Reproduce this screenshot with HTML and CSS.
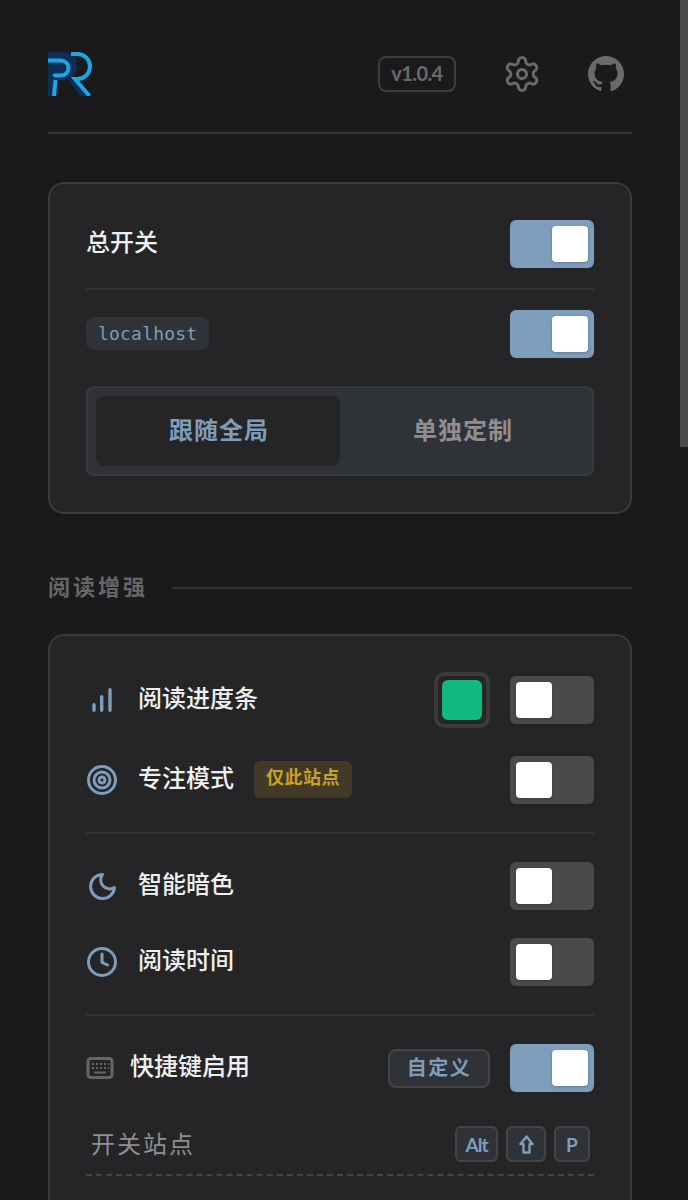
FILE: index.html
```html
<!DOCTYPE html>
<html lang="zh-CN">
<head>
  <meta charset="UTF-8">
  <meta name="viewport" content="width=device-width, initial-scale=1.0">
  <title>PR</title>
  <link rel="stylesheet" href="styles.css">
</head>
<body>
  <div class="scroll-thumb"></div>
  <div class="page">
    <header class="top-bar">
      <svg class="logo" width="44" height="44" viewBox="0 0 44 44" fill="none">
        <path d="M0 0H15a14 14 0 0 1 14 14a14 14 0 0 1-14 14H8l-1 16H0z" fill="#0b2f55"/>
        <path d="M20 27h9l12 17H32z" fill="#0b2f55"/>
        <path d="M23 2h6.500a12.500 12.500 0 0 1 0 25H27L41.500 44" stroke="#1aa7e8" stroke-width="4"/>
        <path d="M0 8.500H13a7.500 7.500 0 0 1 0 15H7L6.500 25M7.500 28L6 44" stroke="#1aa7e8" stroke-width="4"/>
      </svg>
      <span class="version">v1.0.4</span>
      <svg class="head-icon gear" width="36" height="36" viewBox="1 1 22 22" fill="none" stroke="#6a6a6a" stroke-width="1.800" stroke-linecap="round" stroke-linejoin="round">
        <path d="M12.220 2h-.44a2 2 0 0 0-2 2v.18a2 2 0 0 1-1 1.730l-.43.250a2 2 0 0 1-2 0l-.15-.080a2 2 0 0 0-2.730.730l-.22.380a2 2 0 0 0 .730 2.730l.15.100a2 2 0 0 1 1 1.720v.510a2 2 0 0 1-1 1.740l-.15.090a2 2 0 0 0-.730 2.730l.22.380a2 2 0 0 0 2.730.730l.15-.080a2 2 0 0 1 2 0l.43.250a2 2 0 0 1 1 1.730V20a2 2 0 0 0 2 2h.44a2 2 0 0 0 2-2v-.18a2 2 0 0 1 1-1.730l.43-.250a2 2 0 0 1 2 0l.15.080a2 2 0 0 0 2.730-.730l.22-.390a2 2 0 0 0-.730-2.730l-.15-.080a2 2 0 0 1-1-1.740v-.5a2 2 0 0 1 1-1.740l.15-.090a2 2 0 0 0 .730-2.730l-.22-.380a2 2 0 0 0-2.730-.730l-.15.080a2 2 0 0 1-2 0l-.43-.250a2 2 0 0 1-1-1.730V4a2 2 0 0 0-2-2z"/>
        <circle cx="12" cy="12" r="2.800"/>
      </svg>
      <svg class="head-icon github" width="36" height="36" viewBox="0 0 16 16" fill="#6a6a6a">
        <path d="M8 0C3.580 0 0 3.580 0 8c0 3.540 2.290 6.530 5.470 7.590.4.070.55-.17.55-.38 0-.19-.010-.82-.010-1.490-2.010.37-2.530-.49-2.690-.94-.09-.23-.48-.94-.82-1.130-.28-.15-.68-.52-.010-.53.630-.010 1.080.58 1.230.82.720 1.210 1.870.87 2.330.66.070-.52.280-.87.510-1.070-1.780-.2-3.640-.89-3.640-3.950 0-.87.31-1.590.82-2.150-.08-.2-.36-1.020.08-2.120 0 0 .67-.21 2.200.82.640-.18 1.320-.27 2-.27s1.360.09 2 .27c1.530-1.040 2.200-.82 2.200-.82.44 1.100.16 1.920.08 2.120.51.560.82 1.270.82 2.150 0 3.070-1.870 3.750-3.650 3.950.29.25.54.73.54 1.480 0 1.070-.010 1.930-.010 2.200 0 .21.15.46.55.38A8.010 8.010 0 0 0 16 8c0-4.420-3.580-8-8-8z"/>
      </svg>
    </header>

    <section class="card card-main">
      <div class="row">
        <span class="label">总开关</span>
        <div class="toggle on"><span class="knob"></span></div>
      </div>
      <div class="divider main-divider"></div>
      <div class="row">
        <span class="host">localhost</span>
        <div class="toggle on"><span class="knob"></span></div>
      </div>
      <div class="segment">
        <div class="seg-item active">跟随全局</div>
        <div class="seg-item">单独定制</div>
      </div>
    </section>

    <div class="section-title">
      <span class="section-name">阅读增强</span>
      <div class="section-line"></div>
    </div>

    <section class="card card-read">
      <div class="row">
        <svg class="row-icon" width="32" height="32" viewBox="0 0 32 32" fill="none" stroke="#7d9dba" stroke-width="3.400" stroke-linecap="round">
          <path d="M8 26.300v-5.600M15.700 26.300v-13.600M24 26.300v-20.600"/>
        </svg>
        <span class="label">阅读进度条</span>
        <div class="swatch"><span class="swatch-color"></span></div>
        <div class="toggle"><span class="knob"></span></div>
      </div>
      <div class="row gap-32">
        <svg class="row-icon" width="32" height="32" viewBox="0 0 32 32" fill="none" stroke="#7d9dba" stroke-width="3">
          <circle cx="16" cy="16" r="13.500"/>
          <circle cx="16" cy="16" r="8"/>
          <circle cx="16" cy="16" r="3"/>
        </svg>
        <span class="label">专注模式</span>
        <span class="tag">仅此站点</span>
        <div class="toggle push"><span class="knob"></span></div>
      </div>
      <div class="divider read-divider"></div>
      <div class="row">
        <svg class="row-icon" width="32" height="32" viewBox="0 0 32 32" fill="none" stroke="#7d9dba" stroke-width="3" stroke-linejoin="round">
          <path d="M16.500 4.500a12 12 0 1 0 12 13a9 9 0 0 1-12-13z"/>
        </svg>
        <span class="label">智能暗色</span>
        <div class="toggle push"><span class="knob"></span></div>
      </div>
      <div class="row gap-28">
        <svg class="row-icon" width="32" height="32" viewBox="0 0 32 32" fill="none" stroke="#7d9dba" stroke-width="3" stroke-linecap="round" stroke-linejoin="round">
          <circle cx="16" cy="16" r="13.500"/>
          <path d="M16 8v8.500l5.500 2.500"/>
        </svg>
        <span class="label">阅读时间</span>
        <div class="toggle push"><span class="knob"></span></div>
      </div>
      <div class="divider read-divider"></div>
      <div class="row">
        <svg class="key-icon" width="28" height="24" viewBox="0 0 28 24" fill="none">
          <rect x="2" y="2.500" width="24" height="19" rx="3" stroke="#666" stroke-width="3"/>
          <path d="M6 8h2M10 8h2M14 8h2M18 8h2M22 8h1M6 12h2M10 12h2M14 12h2M18 12h2M22 12h1" stroke="#666" stroke-width="2"/>
          <path d="M8 16.500h12" stroke="#666" stroke-width="2"/>
        </svg>
        <span class="label">快捷键启用</span>
        <span class="custom-btn">自定义</span>
        <div class="toggle on"><span class="knob"></span></div>
      </div>
      <div class="shortcut">
        <span class="shortcut-name">开关站点</span>
        <div class="keys">
          <kbd class="key key-alt">Alt</kbd>
          <kbd class="key key-arrow">
            <svg width="15" height="19" viewBox="0 0 15 19" fill="none" stroke="#7d9dba" stroke-width="2.400" stroke-linejoin="round">
              <path d="M7.500 1.500L13.500 9H10.500V17.500H4.500V9H1.500z"/>
            </svg>
          </kbd>
          <kbd class="key">P</kbd>
        </div>
      </div>
    </section>
  </div>
</body>
</html>
```

FILE: styles.css
```css
html {
  background: #1a1a1c;
}
body {
  margin: 0;
  color: #f0f0f0;
  font-family: "Noto Sans CJK SC", Lato, sans-serif;
  font-size: 24px;
}
.scroll-thumb {
  position: fixed;
  top: 0;
  right: 0;
  width: 8px;
  height: 447px;
  background: #4a4a4c;
}
.page {
  box-sizing: border-box;
  padding: 52px 56px 48px 48px;
}
.top-bar {
  display: flex;
  align-items: center;
  height: 44px;
  padding-bottom: 36px;
  border-bottom: 2px solid #333335;
  margin-bottom: 48px;
}
.logo {
  margin-right: auto;
}
.version {
  box-sizing: border-box;
  width: 78px;
  height: 36px;
  line-height: 30px;
  text-align: center;
  border: 2px solid #3c3c3e;
  border-radius: 8px;
  color: #6a6a6a;
  font-family: Lato, sans-serif;
  font-weight: 700;
  font-size: 20px;
  letter-spacing: -0.6px;
}
.head-icon {
  display: block;
}
.gear {
  margin-left: 48px;
}
.github {
  margin-left: 48px;
  margin-right: 8px;
}
.card {
  background: #252527;
  border: 2px solid #3a3a3c;
  border-radius: 16px;
}
.card-main {
  padding: 36px;
}
.card-read {
  padding: 40px 36px 36px;
  min-height: 1200px;
}
.row {
  display: flex;
  align-items: center;
  height: 48px;
}
.gap-32 {
  margin-top: 32px;
}
.gap-28 {
  margin-top: 28px;
}
.label {
  line-height: 34px;
  font-weight: 500;
  position: relative;
  top: -3px;
}
.card-main .label {
  margin-right: auto;
}
.toggle {
  box-sizing: border-box;
  width: 84px;
  height: 48px;
  padding: 6px;
  border-radius: 6px;
  background: #4a4a4c;
  display: flex;
  flex-shrink: 0;
}
.toggle.on {
  background: #7d9dba;
  justify-content: flex-end;
}
.toggle.push {
  margin-left: auto;
}
.knob {
  width: 36px;
  height: 36px;
  border-radius: 4px;
  background: #fff;
  box-shadow: 0 1px 3px rgba(0,0,0,0.2);
}
.divider {
  height: 2px;
  background: #333335;
}
.main-divider {
  margin: 20px 0;
}
.read-divider {
  margin: 28px 0;
}
.host {
  margin-right: auto;
  margin-bottom: 1px;
  padding: 0 12px;
  height: 33px;
  line-height: 34px;
  border-radius: 8px;
  background: #2f3237;
  color: #7d9dba;
  font-family: "DejaVu Sans Mono", monospace;
  font-size: 18px;
  letter-spacing: 0.2px;
}
.segment {
  box-sizing: border-box;
  height: 90px;
  margin-top: 28px;
  padding: 8px;
  display: flex;
  background: #2f3237;
  border: 2px solid #38393d;
  border-radius: 8px;
}
.seg-item {
  flex: 1;
  display: flex;
  align-items: center;
  justify-content: center;
  padding: 0 0 6px 2px;
  font-weight: 700;
  letter-spacing: 1px;
  color: #8f8f8f;
}
.seg-item.active {
  background: #252527;
  border-radius: 8px;
  color: #7d9dba;
}
.section-title {
  display: flex;
  align-items: center;
  gap: 24px;
  height: 30px;
  margin: 59px 0 31px;
  color: #666;
  font-weight: 700;
  font-size: 22px;
  letter-spacing: 3px;
}
.section-name {
  padding-bottom: 6px;
}
.section-line {
  flex: 1;
  height: 2px;
  background: #333335;
}
.row-icon {
  flex-shrink: 0;
  margin-right: 20px;
}
.key-icon {
  flex-shrink: 0;
  margin-right: 16px;
}
.swatch {
  box-sizing: border-box;
  width: 56px;
  height: 56px;
  padding: 4px;
  margin-left: auto;
  margin-right: 20px;
  border: 4px solid #3a3a3c;
  border-radius: 10px;
  flex-shrink: 0;
}
.swatch-color {
  display: block;
  width: 40px;
  height: 40px;
  border-radius: 6px;
  background: #10b981;
}
.tag {
  margin-left: 20px;
  padding: 0 12px;
  height: 37px;
  line-height: 31px;
  margin-bottom: 1px;
  border-radius: 6px;
  background: #423a28;
  color: #c9a227;
  font-weight: 700;
  font-size: 18px;
  letter-spacing: 0.5px;
}
.custom-btn {
  box-sizing: border-box;
  width: 102px;
  height: 39px;
  line-height: 32px;
  margin-left: auto;
  margin-right: 20px;
  text-align: center;
  background: #2f3237;
  border: 2px solid #444;
  border-radius: 8px;
  color: #7d9dba;
  font-weight: 700;
  font-size: 20px;
  letter-spacing: 1.500px;
}
.shortcut {
  display: flex;
  align-items: center;
  justify-content: space-between;
  margin-top: 34px;
  padding: 0 4px 12px 5px;
  border-bottom: 2px dashed #444;
}
.shortcut-name {
  line-height: 30px;
  padding-bottom: 2px;
  color: #8f8f8f;
  letter-spacing: 2px;
}
.keys {
  display: flex;
  gap: 8px;
}
.key {
  box-sizing: border-box;
  display: flex;
  align-items: center;
  justify-content: center;
  width: 36px;
  height: 36px;
  background: #2f3237;
  border: 2px solid #444;
  border-radius: 6px;
  color: #7d9dba;
  font-family: Lato, sans-serif;
  font-weight: 700;
  font-size: 19px;
}
.key-alt {
  width: 43px;
  letter-spacing: -1px;
}
.key-arrow {
  width: 40px;
}
```
